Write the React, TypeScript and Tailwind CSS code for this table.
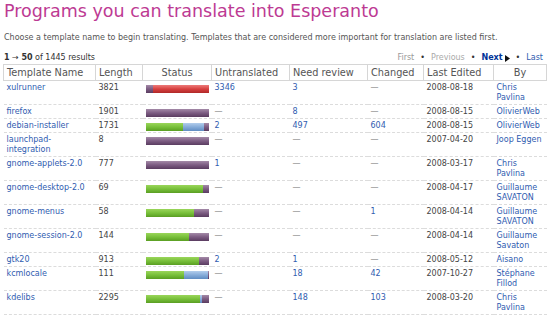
import React from 'react';

type Seg = { c: 'g' | 'b' | 'p' | 'r'; w: number };

interface Row {
  name: string;
  length: string;
  bar: Seg[];
  untranslated: string;
  review: string;
  changed: string;
  edited: string;
  by: string;
}

const SEG_CLASS: Record<Seg['c'], string> = {
  g: 'bg-linear-to-b from-[#9ad65a] via-[#78c03a] to-[#5a9e22]',
  b: 'bg-linear-to-b from-[#b2cdec] via-[#86acd9] to-[#5f8cc2]',
  p: 'bg-linear-to-b from-[#a48aa8] via-[#7c5c82] to-[#5a3c60]',
  r: 'bg-linear-to-b from-[#ec7a7a] via-[#d84040] to-[#b02828]',
};

const ROWS: Row[] = [
  { name: 'xulrunner', length: '3821', bar: [{ c: 'p', w: 8 }, { c: 'r', w: 57 }], untranslated: '3346', review: '3', changed: '', edited: '2008-08-18', by: 'Chris Pavlina' },
  { name: 'firefox', length: '1901', bar: [{ c: 'p', w: 65 }], untranslated: '', review: '8', changed: '', edited: '2008-08-15', by: 'OlivierWeb' },
  { name: 'debian-installer', length: '1731', bar: [{ c: 'g', w: 37 }, { c: 'b', w: 21 }, { c: 'p', w: 5 }], untranslated: '2', review: '497', changed: '604', edited: '2008-08-15', by: 'OlivierWeb' },
  { name: 'launchpad-integration', length: '8', bar: [{ c: 'p', w: 65 }], untranslated: '', review: '', changed: '', edited: '2007-04-20', by: 'Joop Eggen' },
  { name: 'gnome-applets-2.0', length: '777', bar: [{ c: 'p', w: 64 }], untranslated: '1', review: '', changed: '', edited: '2008-03-17', by: 'Chris Pavlina' },
  { name: 'gnome-desktop-2.0', length: '69', bar: [{ c: 'g', w: 58 }, { c: 'p', w: 6 }], untranslated: '', review: '', changed: '', edited: '2008-04-17', by: 'Guillaume SAVATON' },
  { name: 'gnome-menus', length: '58', bar: [{ c: 'g', w: 49 }, { c: 'p', w: 15 }], untranslated: '', review: '', changed: '1', edited: '2008-04-14', by: 'Guillaume SAVATON' },
  { name: 'gnome-session-2.0', length: '144', bar: [{ c: 'g', w: 44 }, { c: 'p', w: 20 }], untranslated: '', review: '', changed: '', edited: '2008-04-14', by: 'Guillaume Savaton' },
  { name: 'gtk20', length: '913', bar: [{ c: 'g', w: 54 }, { c: 'p', w: 10 }], untranslated: '2', review: '1', changed: '', edited: '2008-05-12', by: 'Aisano' },
  { name: 'kcmlocale', length: '111', bar: [{ c: 'g', w: 38 }, { c: 'b', w: 24 }, { c: 'p', w: 1 }], untranslated: '', review: '18', changed: '42', edited: '2007-10-27', by: 'Stéphane Fillod' },
  { name: 'kdelibs', length: '2295', bar: [{ c: 'g', w: 54 }, { c: 'b', w: 2 }, { c: 'p', w: 7 }], untranslated: '', review: '148', changed: '103', edited: '2008-03-20', by: 'Chris Pavlina' },
];

function Count({ value }: { value: string }) {
  if (!value) return <span className="text-[#888]">—</span>;
  return <a className="text-[#2f5cb0]">{value}</a>;
}

function StatusBar({ segs }: { segs: Seg[] }) {
  return (
    <div className="flex h-[8px] mt-[2px]">
      {segs.map((s, i) => (
        <div key={i} className={`h-full ${SEG_CLASS[s.c]}`} style={{ width: s.w }} />
      ))}
    </div>
  );
}

const th = 'border border-[#d6d6d6] px-[3px] pt-[2px] pb-[1px] text-left font-normal text-[9.75px] leading-[12px] text-[#555]';
const td = 'px-[3px] pt-[2px] pb-[1px] align-top';

export default function App() {
  return (
    <div className="w-[550px] h-[315px] overflow-hidden bg-white px-[3px] font-['DejaVu_Sans',sans-serif] text-[#444]">
      <h1 className="pl-[1px] text-[17.5px] leading-[22px] text-[#bd3a93]">Programs you can translate into Esperanto</h1>
      <p className="mt-[11px] pl-[1px] text-[8px] leading-[10px] text-[#555]">
        Choose a template name to begin translating. Templates that are considered more important for translation are listed first.
      </p>

      <div className="mt-[10px] flex items-center justify-between text-[8px] leading-[10px]">
        <div className="pl-[1px] text-[#333]">
          <b>1</b> → <b>50</b> of 1445 results
        </div>
        <div className="flex items-center gap-[6px] pr-[4px] text-[#999]">
          <span>First</span>
          <span className="text-[#333]">•</span>
          <span className="text-[#aaa]">Previous</span>
          <span className="text-[#333]">•</span>
          <span className="flex items-center gap-[2px] font-bold text-[#003399]">
            Next
            <svg width="5" height="7" viewBox="0 0 5 7">
              <path d="M0 0 L5 3.5 L0 7 Z" fill="#111" />
            </svg>
          </span>
          <span className="text-[#333]">•</span>
          <a className="text-[#2f5cb0]">Last</a>
        </div>
      </div>

      <table className="mt-[1px] w-[543px] table-fixed border-collapse text-[8px] leading-[10px]">
        <colgroup>
          <col className="w-[92px]" />
          <col className="w-[47px]" />
          <col className="w-[69px]" />
          <col className="w-[78px]" />
          <col className="w-[78px]" />
          <col className="w-[56px]" />
          <col className="w-[70px]" />
          <col className="w-[53px]" />
        </colgroup>
        <thead>
          <tr>
            <th className={th}>Template Name</th>
            <th className={th}>Length</th>
            <th className={`${th} !text-center`}>Status</th>
            <th className={th}>Untranslated</th>
            <th className={th}>Need review</th>
            <th className={th}>Changed</th>
            <th className={th}>Last Edited</th>
            <th className={`${th} !text-center`}>By</th>
          </tr>
        </thead>
        <tbody>
          {ROWS.map((r) => (
            <tr key={r.name} className="border-b border-dashed border-[#dcdcdc]">
              <td className={td}>
                <a className="text-[#2f5cb0]">{r.name}</a>
              </td>
              <td className={td}>{r.length}</td>
              <td className={td}>
                <StatusBar segs={r.bar} />
              </td>
              <td className={td}>
                <Count value={r.untranslated} />
              </td>
              <td className={td}>
                <Count value={r.review} />
              </td>
              <td className={td}>
                <Count value={r.changed} />
              </td>
              <td className={td}>{r.edited}</td>
              <td className={td}>
                <a className="text-[#2f5cb0]">{r.by}</a>
              </td>
            </tr>
          ))}
        </tbody>
      </table>
    </div>
  );
}
